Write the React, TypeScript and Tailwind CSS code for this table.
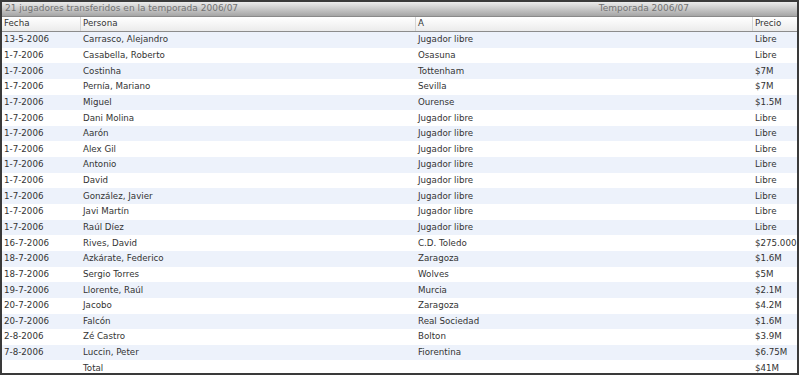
const rows: [string, string, string, string][] = [
  ['13-5-2006', 'Carrasco, Alejandro', 'Jugador libre', 'Libre'],
  ['1-7-2006', 'Casabella, Roberto', 'Osasuna', 'Libre'],
  ['1-7-2006', 'Costinha', 'Tottenham', '$7M'],
  ['1-7-2006', 'Pernía, Mariano', 'Sevilla', '$7M'],
  ['1-7-2006', 'Miguel', 'Ourense', '$1.5M'],
  ['1-7-2006', 'Dani Molina', 'Jugador libre', 'Libre'],
  ['1-7-2006', 'Aarón', 'Jugador libre', 'Libre'],
  ['1-7-2006', 'Alex Gil', 'Jugador libre', 'Libre'],
  ['1-7-2006', 'Antonio', 'Jugador libre', 'Libre'],
  ['1-7-2006', 'David', 'Jugador libre', 'Libre'],
  ['1-7-2006', 'González, Javier', 'Jugador libre', 'Libre'],
  ['1-7-2006', 'Javi Martín', 'Jugador libre', 'Libre'],
  ['1-7-2006', 'Raúl Díez', 'Jugador libre', 'Libre'],
  ['16-7-2006', 'Rives, David', 'C.D. Toledo', '$275.000'],
  ['18-7-2006', 'Azkárate, Federico', 'Zaragoza', '$1.6M'],
  ['18-7-2006', 'Sergio Torres', 'Wolves', '$5M'],
  ['19-7-2006', 'Llorente, Raúl', 'Murcia', '$2.1M'],
  ['20-7-2006', 'Jacobo', 'Zaragoza', '$4.2M'],
  ['20-7-2006', 'Falcón', 'Real Sociedad', '$1.6M'],
  ['2-8-2006', 'Zé Castro', 'Bolton', '$3.9M'],
  ['7-8-2006', 'Luccin, Peter', 'Fiorentina', '$6.75M'],
  ['', 'Total', '', '$41M'],
];

const cols = 'grid grid-cols-[78px_335px_337px_1fr]';

export default function App() {
  return (
    <div className="w-[799px] h-[375px] overflow-hidden bg-white border-2 border-[#3a3a3a] font-['DejaVu_Sans',Verdana,sans-serif] text-[8.7px] text-[#333]">
      <div className="flex h-[15px] items-center bg-gradient-to-b from-[#ececec] to-[#a5a5a5] text-[9px] text-[#727272] border-b border-[#8a8a8a]">
        <span className="pl-[3px]">21 jugadores transferidos en la temporada 2006/07</span>
        <span className="ml-auto mr-[108px]">Temporada 2006/07</span>
      </div>
      <div className={`${cols} h-[15px] items-center bg-gradient-to-b from-white to-[#ebebeb] border-b border-[#8c8c8c] text-[#333]`}>
        <div className="pl-[2px]">Fecha</div>
        <div className="pl-[2px] border-l border-[#d4d4d4] h-full flex items-center">Persona</div>
        <div className="pl-[2px] border-l border-[#d4d4d4] h-full flex items-center">A</div>
        <div className="pl-[2px] border-l border-[#d4d4d4] h-full flex items-center">Precio</div>
      </div>
      {rows.map((r, i) => (
        <div
          key={i}
          className={`${cols} h-[15.65px] items-center ${i % 2 === 0 ? 'bg-[#edf2fb]' : 'bg-white'}`}
        >
          <div className="pl-[2px]">{r[0]}</div>
          <div className="pl-[3px]">{r[1]}</div>
          <div className="pl-[3px]">{r[2]}</div>
          <div className="pl-[3px]">{r[3]}</div>
        </div>
      ))}
    </div>
  );
}
